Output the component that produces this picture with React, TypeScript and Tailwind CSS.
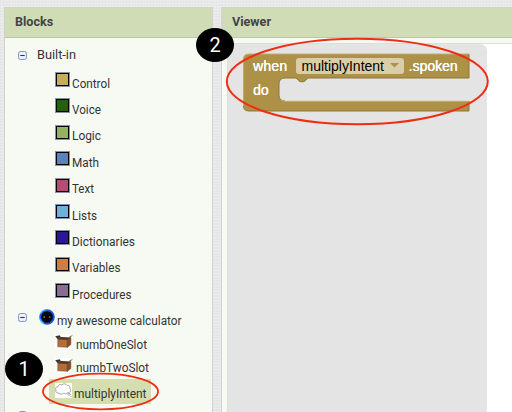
import React from "react";

const categories = [
  { name: "Control", color: "#c7ac5a", width: 38 },
  { name: "Voice", color: "#25600f", width: 29 },
  { name: "Logic", color: "#92b462", width: 29 },
  { name: "Math", color: "#5c82bd", width: 27 },
  { name: "Text", color: "#b74c73", width: 22 },
  { name: "Lists", color: "#6eb0d9", width: 25 },
  { name: "Dictionaries", color: "#2d1692", width: 63 },
  { name: "Variables", color: "#d07b48", width: 48.5 },
  { name: "Procedures", color: "#8a6b94", width: 59.5 },
];

function Toggle() {
  return (
    <svg className="block shrink-0" width="9" height="9" viewBox="0 0 9 9">
      <rect x="0.6" y="0.6" width="7.8" height="7.8" rx="1.7" fill="#f1f4ff" stroke="#7e8fc4" />
      <path d="M2.3 4.5H6.7" stroke="#2020c8" strokeWidth="1.1" />
    </svg>
  );
}

function Screen() {
  return (
    <svg className="block shrink-0" width="16" height="16" viewBox="0 0 16 16">
      <circle cx="8" cy="8" r="6.8" fill="#050505" stroke="#1856ed" strokeWidth="1.9" />
      <path d="M1.4 5A7.2 7.2 0 0 1 7.5.8M1 10A7.2 7.2 0 0 0 5 14.7" fill="none" stroke="#49c6ee" strokeWidth="1.1" />
      <path d="M4.5 8H6M10 8h1.5" stroke="#b9b9b9" strokeWidth="1.1" />
    </svg>
  );
}

function BoxIcon() {
  return (
    <svg className="block shrink-0" width="18" height="15" viewBox="0 0 18 15">
      <path d="M0 0h16v15H0z" fill="#fff" />
      <path d="M2.8 5.6H12.4V13.3L2.8 12.8Z" fill="#b36d35" stroke="#684022" strokeWidth=".5" />
      <path d="M12.4 5.6L15.8 3.6V10.6L12.4 13.3Z" fill="#864821" stroke="#5c351c" strokeWidth=".5" />
      <path d="M2.8 5.4L5.6 3.1L15.8 3.4L12.4 5.8Z" fill="#51301a" />
      <path d="M.2 2.3L4.6 1.3L5.9 3.1L2.8 5.6Z" fill="#3c352f" />
      <path d="M12.2 5.8L15.3 3.3L18 1.2L15.1 2Z" fill="#72533b" />
    </svg>
  );
}

function CloudIcon() {
  return (
    <svg className="block shrink-0" width="17" height="15" viewBox="0 0 17 15">
      <path d="M0 0h17v15H0z" fill="#fff" />
      <path d="M4 10C1.7 10.6.1 8.7 1 7C-.1 5.2 1 3.7 2.8 3.8C3 1.7 5.3.9 6.8 1.9C8.6.1 11.2.7 12.1 2.4C14.4 2.1 15.8 4.2 14.9 5.8C16.7 7.6 15 9.9 12.9 9.6C11.3 11.3 9.2 10.8 8.5 10.2C7 11.7 4.8 11.3 4 10Z" fill="#fff" stroke="#8e8e8e" strokeWidth=".8" />
      <ellipse cx="14" cy="11.3" rx="1.4" ry=".9" fill="#fff" stroke="#8e8e8e" strokeWidth=".7" />
      <circle cx="16" cy="13.5" r=".6" fill="#999" />
    </svg>
  );
}

function Label({ text, width }: { text: string; width: number }) {
  return (
    <svg className="block shrink-0 overflow-visible" width={width} height="16">
      <text x="0" y="12" textLength={width} lengthAdjust="spacingAndGlyphs" fill="#333" className="font-[Roboto,sans-serif] text-[12px]">
        {text}
      </text>
    </svg>
  );
}

function PanelTitle({ text }: { text: string }) {
  return (
    <div className="flex h-[30px] shrink-0 items-center border-b border-[#bdc8aa] bg-[#d0dcb6] pl-[10px] font-[Roboto,sans-serif] text-[12.6px] font-bold text-[#444]">
      {text}
    </div>
  );
}

function EventBlock() {
  return (
    <div className="relative h-[59px] w-[227px] font-['Liberation_Sans',sans-serif] text-[14px] leading-[16px]">
      <svg className="absolute inset-0" width="227" height="59" viewBox="0 0 227 59">
        <path d="M6 1H226V25H65L61 28.7H57L53 25H42Q36 25 36 31V42Q36 48 42 48H226V58H6Q0.5 58 0.5 53V6Q0.5 1 6 1Z" fill="#ad9146" />
        <path d="M0.5 53V6Q0.5 1 6 1H226" fill="none" stroke="#c2ad70" strokeWidth="1" />
        <path d="M226 1V25H65L61 28.7H57L53 25H42Q36 25 36 31V42Q36 48 42 48M226 48V58H6Q0.5 58 0.5 53" fill="none" stroke="#907735" strokeWidth="1" />
        <path d="M38 47Q39.5 48.3 42 48.3H226" fill="none" stroke="#c4b071" strokeWidth="1" />
      </svg>
      <div className="relative flex h-[25px] items-center pl-[10px] text-white [text-shadow:0.25px_0_0_white]">
        <span className="w-[42.5px] tracking-[0.15px]">when</span>
        <div className="flex h-[16px] w-[108px] items-center rounded-[3px] bg-[#dacda9] pl-[6px] text-black [text-shadow:none]">
          <span className="w-[84px]">multiplyIntent</span>
          <svg className="ml-[4px] block" width="9" height="5"><path d="M0 0H9L4.5 4.5Z" fill="#ad9146" /></svg>
        </div>
        <span className="ml-[5px]">.spoken</span>
      </div>
      <div className="relative flex h-[24px] items-center pl-[10px] text-white [text-shadow:0.25px_0_0_white]">do</div>
    </div>
  );
}

function Badge({ text }: { text: string }) {
  return (
    <div className="flex h-[34px] w-[38px] items-center justify-center rounded-[50%] bg-black font-[Roboto,sans-serif] text-[20px] text-white">
      {text}
    </div>
  );
}

export default function App() {
  return (
    <div className="relative flex h-[412px] w-[512px] overflow-hidden bg-[#e8e8e8] bg-[repeating-linear-gradient(0deg,#ffffff33_0px,#ffffff33_1px,transparent_1px,transparent_3px),repeating-linear-gradient(90deg,#d4d4d433_0px,#d4d4d433_1px,transparent_1px,transparent_3px)] pl-[4px] pt-[7px]">
      <section className="flex h-[405px] w-[209px] shrink-0 flex-col border-x border-t border-[#d1d3cf] bg-[#f7faf3]">
        <PanelTitle text="Blocks" />
        <div className="flex h-[34px] shrink-0 items-center pl-[13px]">
          <Toggle />
          <div className="ml-[10px]"><Label text="Built-in" width={39} /></div>
        </div>
        <div className="flex shrink-0 flex-col pl-[50px]">
          {categories.map((c) => (
            <div key={c.name} className="flex h-[26.4px] shrink-0 items-start">
              <div className="h-[15px] w-[15px] shrink-0 border border-[#8792a5] bg-black p-px">
                <div className="h-full w-full" style={{ backgroundColor: c.color }} />
              </div>
              <div className="ml-[2.4px] mt-[3.6px]"><Label text={c.name} width={c.width} /></div>
            </div>
          ))}
        </div>
        <div className="flex h-[24px] shrink-0 items-start pl-[13px]">
          <div className="mt-[3px]"><Toggle /></div>
          <div className="ml-[12px] -mt-px"><Screen /></div>
          <div className="ml-[2px] mt-[3px]"><Label text="my awesome calculator" width={124.5} /></div>
        </div>
        <div className="flex h-[24px] shrink-0 items-start pl-[50px]">
          <BoxIcon />
          <div className="ml-[3.3px] mt-[3px]"><Label text="numbOneSlot" width={71} /></div>
        </div>
        <div className="flex h-[21px] shrink-0 items-start pl-[50px]">
          <BoxIcon />
          <div className="ml-[3.3px] mt-[2.4px]"><Label text="numbTwoSlot" width={73} /></div>
        </div>
        <div className="ml-[44px] flex h-[25px] w-[102px] shrink-0 items-start bg-[#d5deaf] pl-[6px] pt-[4px]">
          <CloudIcon />
          <div className="ml-[2.3px] mt-[3px]"><Label text="multiplyIntent" width={72.5} /></div>
        </div>
        <div className="ml-[13px] mt-[7px]"><Toggle /></div>
      </section>
      <section className="ml-[8px] flex h-[405px] w-[291px] shrink-0 flex-col border-l border-t border-[#d1d3cf] bg-[#f7faf3]">
        <PanelTitle text="Viewer" />
        <div className="ml-[5px] mt-[5px] flex flex-1 border-l border-t border-[#deded9] bg-white">
          <div className="w-[259px] rounded-tr-[7px] bg-[#e4e4e4] pl-[15px] pt-[9px]">
            <EventBlock />
          </div>
        </div>
      </section>
      <div className="absolute left-[196px] top-[28px]"><Badge text="2" /></div>
      <div className="absolute left-[5px] top-[352px]"><Badge text="1" /></div>
      <svg className="pointer-events-none absolute inset-0" width="512" height="412">
        <ellipse cx="357.3" cy="81.5" rx="130.5" ry="42.7" fill="none" stroke="#ee2e12" strokeWidth="2" />
        <ellipse cx="100.5" cy="391.5" rx="57.5" ry="17.8" fill="none" stroke="#ee2e12" strokeWidth="1.8" />
      </svg>
    </div>
  );
}
